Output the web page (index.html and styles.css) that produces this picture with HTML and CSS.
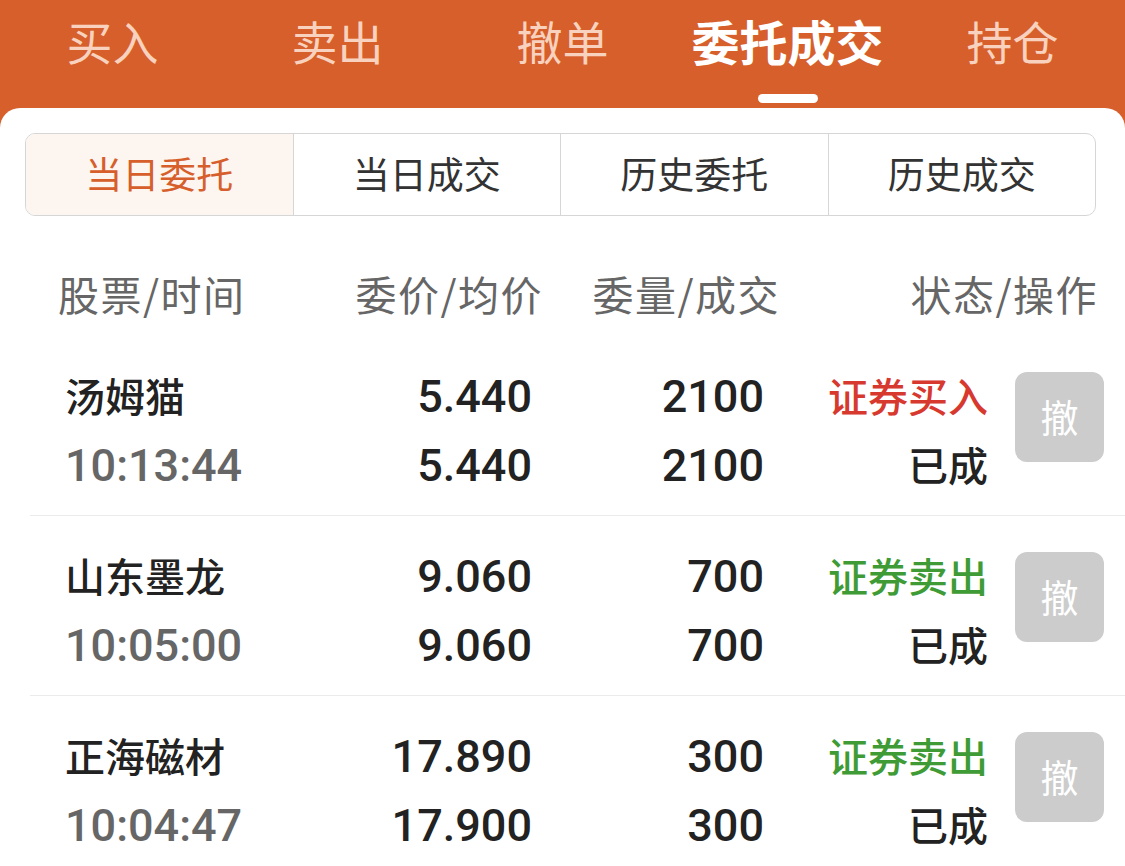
FILE: index.html
```html
<!DOCTYPE html>
<html lang="zh-CN">
<head>
<meta charset="utf-8">
<title>委托成交</title>
<link rel="stylesheet" href="styles.css">
</head>
<body>
<div class="page">
  <header class="topbar">
    <div class="tab"><span class="tab-label">买入</span></div>
    <div class="tab"><span class="tab-label">卖出</span></div>
    <div class="tab"><span class="tab-label">撤单</span></div>
    <div class="tab tab-active"><span class="tab-label">委托成交</span><span class="tab-bar"></span></div>
    <div class="tab"><span class="tab-label">持仓</span></div>
  </header>
  <main class="card">
    <div class="segment">
      <div class="seg seg-active">当日委托</div>
      <div class="seg">当日成交</div>
      <div class="seg">历史委托</div>
      <div class="seg">历史成交</div>
    </div>
    <div class="thead">
      <div class="th th-left">股票/时间</div>
      <div class="th">委价/均价</div>
      <div class="th">委量/成交</div>
      <div class="th">状态/操作</div>
    </div>

    <div class="row">
      <div class="cells">
        <div class="name">汤姆猫</div>
        <div class="num">5.440</div>
        <div class="num">2100</div>
        <div class="status buy">证券买入</div>
        <div class="time">10:13:44</div>
        <div class="num">5.440</div>
        <div class="num">2100</div>
        <div class="status">已成</div>
      </div>
      <div class="cancel">撤</div>
    </div>

    <div class="row">
      <div class="cells">
        <div class="name">山东墨龙</div>
        <div class="num">9.060</div>
        <div class="num">700</div>
        <div class="status sell">证券卖出</div>
        <div class="time">10:05:00</div>
        <div class="num">9.060</div>
        <div class="num">700</div>
        <div class="status">已成</div>
      </div>
      <div class="cancel">撤</div>
    </div>

    <div class="row">
      <div class="cells">
        <div class="name">正海磁材</div>
        <div class="num">17.890</div>
        <div class="num">300</div>
        <div class="status sell">证券卖出</div>
        <div class="time">10:04:47</div>
        <div class="num">17.900</div>
        <div class="num">300</div>
        <div class="status">已成</div>
      </div>
      <div class="cancel">撤</div>
    </div>
  </main>
</div>
</body>
</html>
```
FILE: styles.css
```css
* { box-sizing: border-box; }
html, body {
  margin: 0;
  padding: 0;
  width: 1125px;
  height: 866px;
  overflow: hidden;
  background: #d65f2b;
  font-family: "Noto Sans CJK SC", "Liberation Sans", sans-serif;
}
.page {
  display: flex;
  flex-direction: column;
  height: 866px;
}
.topbar {
  display: flex;
  height: 108px;
  background: #d65f2b;
  flex: none;
}
.tab {
  flex: 1;
  display: flex;
  flex-direction: column;
  align-items: center;
}
.tab-label {
  font-size: 46px;
  line-height: 80px;
  color: #f8d2be;
  font-weight: 400;
}
.tab-active .tab-label {
  color: #ffffff;
  font-weight: 700;
  font-size: 48px;
}
.tab-bar {
  width: 60px;
  height: 9px;
  border-radius: 5px;
  background: #ffffff;
  margin-top: 14px;
}
.card {
  flex: 1;
  background: #ffffff;
  border-radius: 20px 20px 0 0;
  padding-top: 25px;
  overflow: hidden;
}
.segment {
  display: flex;
  height: 83px;
  margin: 0 29px 0 25px;
  border: 1.5px solid #d6d6d6;
  border-radius: 10px;
  overflow: hidden;
}
.seg {
  flex: 1;
  display: flex;
  align-items: center;
  justify-content: center;
  font-size: 37px;
  color: #333333;
  border-left: 1.5px solid #d6d6d6;
  padding-bottom: 3px;
}
.seg:first-child { border-left: none; }
.seg-active {
  background: #fdf5f0;
  color: #d65f2b;
}
.thead {
  display: grid;
  grid-template-columns: 242px 243px 237px 1fr;
  margin-top: 37px;
  height: 83px;
  padding: 0 27px 0 58px;
  align-items: start;
}
.th {
  font-size: 41px;
  color: #666666;
  text-align: right;
  line-height: 80px;
  white-space: nowrap;
  letter-spacing: 1.5px;
}
.th-left { text-align: left; }
.row {
  display: flex;
  align-items: flex-start;
  margin-left: 30px;
  padding: 26px 21px 15px 35px;
  border-bottom: 1px solid #ebebeb;
}
.cells {
  display: grid;
  grid-template-columns: 235px 233px 232px 223px;
  grid-auto-rows: 69px;
  align-items: center;
}
.name {
  font-size: 40px;
  font-weight: 500;
  color: #222222;
  padding-bottom: 4px;
}
.time {
  font-family: Roboto, "Noto Sans CJK SC", sans-serif;
  font-size: 45px;
  font-weight: 500;
  color: #666666;
}
.num {
  font-family: Roboto, "Noto Sans CJK SC", sans-serif;
  font-size: 45px;
  font-weight: 500;
  color: #222222;
  text-align: right;
  padding-right: 1px;
}
.status {
  font-size: 40px;
  font-weight: 500;
  color: #222222;
  text-align: right;
  padding-bottom: 4px;
}
.buy { color: #d8392f; }
.sell { color: #3e9b35; }
.cancel {
  width: 89px;
  height: 90px;
  margin: 10px 0 0 27px;
  border-radius: 12px;
  background: #cccccc;
  color: #ffffff;
  font-size: 38px;
  display: flex;
  align-items: center;
  justify-content: center;
  flex: none;
  padding-bottom: 4px;
}
```
